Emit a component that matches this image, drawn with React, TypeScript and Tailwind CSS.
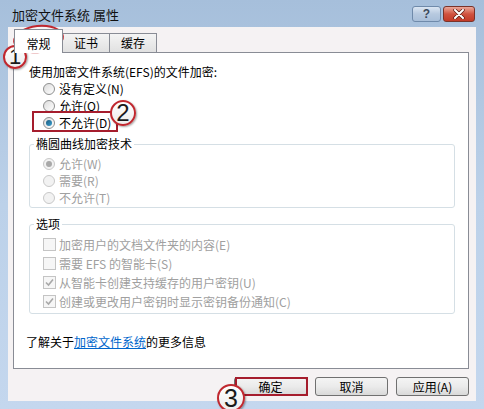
import React from "react";

const font = "font-['Noto_Sans_CJK_SC','Noto_Sans',sans-serif]";

function Radio({ checked, disabled }: { checked?: boolean; disabled?: boolean }) {
  return (
    <span
      className={`flex h-[12px] w-[12px] shrink-0 items-center justify-center rounded-full border ${
        disabled ? "border-[#c8c8c8] bg-[#f2f2f2]" : "border-[#8e8f8f] bg-gradient-to-br from-[#dcdcdc] to-[#ffffff]"
      }`}
    >
      {checked && (
        <span
          className={`h-[6px] w-[6px] rounded-full ${
            disabled ? "bg-[#a8a8a8]" : "bg-gradient-to-br from-[#1c5c80] to-[#3aa0d0]"
          }`}
        />
      )}
    </span>
  );
}

function Check({ checked }: { checked?: boolean }) {
  return (
    <span className="flex h-[13px] w-[13px] shrink-0 items-center justify-center border border-[#c4c4c4] bg-[#f6f6f6]">
      {checked && (
        <svg width="9" height="9" viewBox="0 0 9 9">
          <path d="M1 4.5 L3.5 7 L8 1.5" fill="none" stroke="#a8a8a8" strokeWidth="1.6" />
        </svg>
      )}
    </span>
  );
}

function RadioRow({
  label,
  checked,
  disabled,
}: {
  label: string;
  checked?: boolean;
  disabled?: boolean;
}) {
  return (
    <div className="flex h-[17px] items-center gap-[4px] pl-[29px]">
      <Radio checked={checked} disabled={disabled} />
      <span className={disabled ? "text-[#a0a0a0]" : "text-black"}>{label}</span>
    </div>
  );
}

function CheckRow({ label, checked }: { label: string; checked?: boolean }) {
  return (
    <div className="flex h-[19px] items-center gap-[3px] pl-[13px]">
      <Check checked={checked} />
      <span className="text-[#a0a0a0]">{label}</span>
    </div>
  );
}

function Button({ label }: { label: string }) {
  return (
    <button className="flex h-[19px] w-[73px] items-center justify-center rounded-[3px] border border-[#707070] bg-gradient-to-b from-[#f4f4f4] via-[#ebebeb] to-[#d9d9d9] text-[12px] leading-none text-black">
      {label}
    </button>
  );
}

function Badge({ n, className }: { n: string; className: string }) {
  return (
    <div
      className={`absolute flex items-center justify-center rounded-full border-2 border-[#c0282f] bg-gradient-to-b from-white to-[#ececec] font-['Liberation_Sans',sans-serif] leading-none text-[#1a1a1a] shadow-[1px_1px_2px_rgba(0,0,0,0.35)] ${className}`}
    >
      {n}
    </div>
  );
}

export default function App() {
  return (
    <div
      className={`relative flex h-[409px] w-[484px] flex-col overflow-hidden bg-gradient-to-b from-[#a6bfdb] via-[#bcd1e9] to-[#c4d7ee] text-[12px] ${font}`}
    >
      {/* title bar */}
      <div className="flex h-[27px] shrink-0 items-start justify-between pl-[12px] pr-[9px]">
        <span className="mt-[6px] text-[13px] leading-[17px] text-[#111]">加密文件系统 属性</span>
        <div className="mt-[6px] flex gap-[2px]">
          <div className="flex h-[16px] w-[29px] items-center justify-center rounded-[3px] border border-[#6f8aaa] bg-gradient-to-b from-[#dbe6f3] via-[#b7c9df] to-[#a9bfd9]">
            <span className="font-['Liberation_Sans',sans-serif] text-[12px] font-bold leading-none text-[#3c4a5c]">?</span>
          </div>
          <div className="flex h-[16px] w-[32px] items-center justify-center rounded-[3px] border border-[#7a3329] bg-gradient-to-b from-[#e9a799] via-[#d0523f] to-[#c23a27]">
            <svg width="12" height="10" viewBox="0 0 12 10">
              <path d="M2 1 L10 9 M10 1 L2 9" stroke="#5a1a12" strokeWidth="3.4" strokeLinecap="round" />
              <path d="M2 1 L10 9 M10 1 L2 9" stroke="#ffffff" strokeWidth="2" strokeLinecap="round" />
            </svg>
          </div>
        </div>
      </div>

      {/* client area */}
      <div className="mx-[8px] mb-[8px] flex flex-1 flex-col bg-[#f5f2f3]">
        {/* tabs */}
        <div className="flex h-[25px] items-end pl-[6px]">
          <div className="relative z-10 mb-[-1px] flex h-[24px] w-[49px] items-start justify-center border border-b-0 border-[#898c95] bg-white pt-[5px]">
            常规
          </div>
          <div className="flex h-[19px] w-[47px] items-center justify-center border border-b-0 border-l-0 border-[#898c95] bg-gradient-to-b from-[#f4f4f4] to-[#e1e1e1]">
            证书
          </div>
          <div className="flex h-[19px] w-[47px] items-center justify-center border border-b-0 border-l-0 border-[#898c95] bg-gradient-to-b from-[#f4f4f4] to-[#e1e1e1]">
            缓存
          </div>
        </div>

        {/* panel */}
        <div className="ml-[5px] mr-[7px] flex h-[317px] flex-col border border-[#898c95] bg-white pt-[11px] leading-[16px]">
          <div className="flex h-[16px] items-center pl-[15px]">使用加密文件系统(EFS)的文件加密:</div>
          <RadioRow label="没有定义(N)" />
          <RadioRow label="允许(O)" />
          <RadioRow label="不允许(D)" checked />

          <fieldset className="mx-[15px] mr-[13px] mt-[5px] rounded-[3px] border border-[#d5dfe5] pb-[1px]">
            <legend className="ml-[4px] px-[2px] leading-[16px]">椭圆曲线加密技术</legend>
            <div className="pt-[3px] [&>div]:pl-[13px]">
              <RadioRow label="允许(W)" checked disabled />
              <RadioRow label="需要(R)" disabled />
              <RadioRow label="不允许(T)" disabled />
            </div>
          </fieldset>

          <fieldset className="mx-[15px] mr-[13px] mt-[8px] rounded-[3px] border border-[#d5dfe5] pb-[2px]">
            <legend className="ml-[4px] px-[2px] leading-[16px]">选项</legend>
            <div className="pt-[3px]">
              <CheckRow label="加密用户的文档文件夹的内容(E)" />
              <CheckRow label="需要 EFS 的智能卡(S)" />
              <CheckRow label="从智能卡创建支持缓存的用户密钥(U)" checked />
              <CheckRow label="创建或更改用户密钥时显示密钥备份通知(C)" checked />
            </div>
          </fieldset>

          <div className="mt-[20px] flex h-[16px] items-center pl-[12px]">
            了解关于<span className="text-[#0066cc] underline">加密文件系统</span>的更多信息
          </div>
        </div>

        {/* buttons */}
        <div className="mr-[7px] mt-[8px] flex justify-end gap-[8px]">
          <Button label="确定" />
          <Button label="取消" />
          <Button label="应用(A)" />
        </div>
      </div>

      {/* annotations */}
      <div className="absolute left-[13px] top-[25px] h-[28px] w-[51px] -rotate-6 rounded-[50%] border-2 border-[#c0282f]" />
      <div className="absolute left-[32px] top-[111px] h-[21px] w-[86px] border-2 border-[#a51d2d]" />
      <div className="absolute left-[235px] top-[377px] h-[19px] w-[73px] border-2 border-[#a51d2d]" />
      <Badge n="1" className="left-[3px] top-[45px] h-[24px] w-[24px] text-[22px]" />
      <Badge n="2" className="left-[110px] top-[100px] h-[26px] w-[26px] text-[24px]" />
      <Badge n="3" className="left-[217px] top-[384px] h-[28px] w-[28px] text-[25px]" />
    </div>
  );
}
